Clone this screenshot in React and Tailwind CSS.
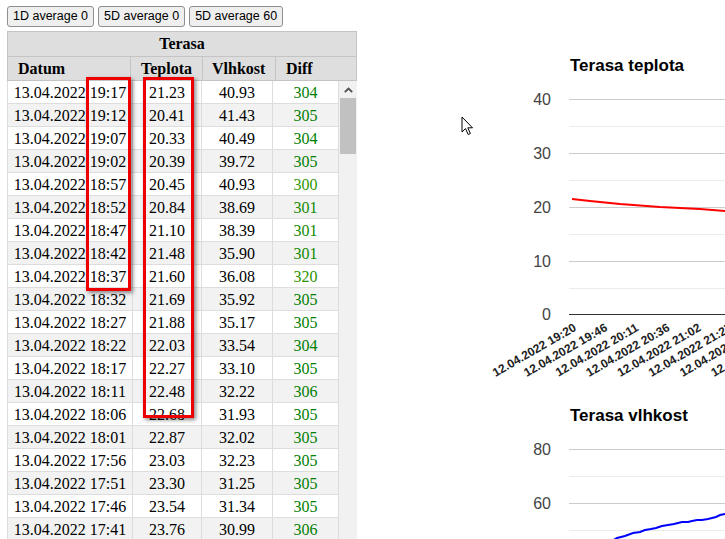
import React from "react";

const rows = [
  ["19:17", "21.23", "40.93", 304],
  ["19:12", "20.41", "41.43", 305],
  ["19:07", "20.33", "40.49", 304],
  ["19:02", "20.39", "39.72", 305],
  ["18:57", "20.45", "40.93", 300],
  ["18:52", "20.84", "38.69", 301],
  ["18:47", "21.10", "38.39", 301],
  ["18:42", "21.48", "35.90", 301],
  ["18:37", "21.60", "36.08", 320],
  ["18:32", "21.69", "35.92", 305],
  ["18:27", "21.88", "35.17", 305],
  ["18:22", "22.03", "33.54", 304],
  ["18:17", "22.27", "33.10", 305],
  ["18:11", "22.48", "32.22", 306],
  ["18:06", "22.68", "31.93", 305],
  ["18:01", "22.87", "32.02", 305],
  ["17:56", "23.03", "32.23", 305],
  ["17:51", "23.30", "31.25", 305],
  ["17:46", "23.54", "31.34", 305],
  ["17:41", "23.76", "30.99", 306],
];

const diffColor = (d) => {
  if (d === 300) return "#2f9800";
  if (d === 320) return "#2a9400";
  if (d === 301) return "#138a00";
  return "#008000";
};

const xLabels = [
  "12.04.2022 19:20",
  "12.04.2022 19:46",
  "12.04.2022 20:11",
  "12.04.2022 20:36",
  "12.04.2022 21:02",
  "12.04.2022 21:27",
  "12.04.2022 21:53",
  "12.04.2022 22:18",
];

function Chart1() {
  const major = [99, 153, 207, 261];
  const minor = [126, 180, 234, 288];
  const labels = ["40", "30", "20", "10"];
  return (
    <svg width="245" height="350" className="block">
      <g transform="translate(-480,-40)" fontFamily="'Liberation Sans', Arial, sans-serif">
        <text x="570" y="71" fontSize="17" fontWeight="bold" fill="#000">Terasa teplota</text>
        {minor.map((y) => (
          <line key={"m" + y} x1="569" x2="760" y1={y + 0.5} y2={y + 0.5} stroke="#ebebeb" strokeWidth="1" />
        ))}
        {major.map((y, i) => (
          <g key={"M" + y}>
            <line x1="569" x2="760" y1={y + 0.5} y2={y + 0.5} stroke="#cccccc" strokeWidth="1" />
            <text x="551" y={y + 6} fontSize="16" fill="#444" textAnchor="end">{labels[i]}</text>
          </g>
        ))}
        <line x1="569" x2="760" y1="314.5" y2="314.5" stroke="#333" strokeWidth="1" />
        <text x="551" y="320" fontSize="16" fill="#444" textAnchor="end">0</text>
        <polyline
          points="572,199 590,201 620,204 660,207 700,209 725,211 740,212"
          fill="none"
          stroke="#ff0000"
          strokeWidth="2"
        />
        {xLabels.map((t, i) => {
          const ex = 577 + 31.2 * i;
          const ey = 330;
          return (
            <text
              key={t}
              x={ex}
              y={ey}
              fontSize="12"
              fontWeight="bold"
              fill="#222"
              textAnchor="end"
              transform={`rotate(-30 ${ex} ${ey})`}
            >
              {t}
            </text>
          );
        })}
      </g>
    </svg>
  );
}

function Chart2() {
  return (
    <svg width="245" height="149" className="block">
      <g transform="translate(-480,-390)" fontFamily="'Liberation Sans', Arial, sans-serif">
        <text x="570" y="421" fontSize="17" fontWeight="bold" fill="#000">Terasa vlhkost</text>
        <line x1="569" x2="760" y1="476.5" y2="476.5" stroke="#ebebeb" />
        <line x1="569" x2="760" y1="530.5" y2="530.5" stroke="#ebebeb" />
        <line x1="569" x2="760" y1="449.5" y2="449.5" stroke="#cccccc" />
        <line x1="569" x2="760" y1="503.5" y2="503.5" stroke="#cccccc" />
        <text x="551" y="455" fontSize="16" fill="#444" textAnchor="end">80</text>
        <text x="551" y="509" fontSize="16" fill="#444" textAnchor="end">60</text>
        <polyline
          points="612,541 617,538 625,536 633,533 640,532 645,530 651,529 656,528 662,526 668,525 674,524 678,523 682,522 688,522 692,521 697,520 702,520 708,519 712,518 716,517 720,515 725,514 735,514"
          fill="none"
          stroke="#0000ff"
          strokeWidth="2"
        />
      </g>
    </svg>
  );
}

function Btn({ children }) {
  return (
    <button className="h-[21px] px-[5px] rounded-[3px] border border-[#8f8f8f] bg-[#efefef] text-[12.5px] leading-none text-black font-['Liberation_Sans',Arial,sans-serif]">
      {children}
    </button>
  );
}

export default function App() {
  return (
    <div className="relative w-[725px] h-[539px] overflow-hidden bg-white flex">
      {/* Left column */}
      <div className="w-[357px] shrink-0 pl-[7px] pt-[6px] flex flex-col">
        <div className="flex gap-[4px]">
          <Btn>1D average 0</Btn>
          <Btn>5D average 0</Btn>
          <Btn>5D average 60</Btn>
        </div>
        <div className="relative mt-[4px] w-[350px] font-['Liberation_Serif','Times_New_Roman',serif] text-[16px] text-black">
          {/* header */}
          <div className="border border-[#c4c4c4] bg-[#dedede] font-bold">
            <div className="h-[25px] flex items-center justify-center border-b border-[#c4c4c4]">Terasa</div>
            <div className="grid grid-cols-[123px_72px_73px_80px] h-[23px]">
              <div className="flex items-center pl-[10px] border-r border-[#c4c4c4]">Datum</div>
              <div className="flex items-center pl-[10px] border-r border-[#c4c4c4]">Teplota</div>
              <div className="flex items-center pl-[9px] border-r border-[#c4c4c4]">Vlhkost</div>
              <div className="flex items-center pl-[10px]">Diff</div>
            </div>
          </div>
          {/* body */}
          <div className="flex h-[470px] overflow-hidden">
            <div className="w-[332px] border-l border-[#dddddd]">
              {rows.map((r, i) => (
                <div
                  key={r[0]}
                  className={
                    "grid grid-cols-[125px_69px_71px_66px] h-[23px] border-b border-[#dddddd] " +
                    (i % 2 === 1 ? "bg-[#f2f2f2]" : "bg-white")
                  }
                >
                  <div className="flex items-center justify-center border-r border-[#dddddd] whitespace-nowrap">
                    13.04.2022 {r[0]}
                  </div>
                  <div className="flex items-center justify-center border-r border-[#dddddd]">{r[1]}</div>
                  <div className="flex items-center justify-center border-r border-[#dddddd]">{r[2]}</div>
                  <div className="flex items-center justify-center border-r border-[#dddddd]" style={{ color: diffColor(r[3]) }}>
                    {r[3]}
                  </div>
                </div>
              ))}
            </div>
            <div className="w-[18px] bg-[#f1f1f1] flex flex-col">
              <div className="h-[17px] flex items-center justify-center">
                <svg width="9" height="6" viewBox="0 0 9 6">
                  <path d="M0.8 5.2 L4.5 1.5 L8.2 5.2" fill="none" stroke="#505050" strokeWidth="1.8" />
                </svg>
              </div>
              <div className="h-[56px] mx-[1px] bg-[#c1c1c1]" />
            </div>
          </div>
          {/* highlight boxes */}
          <div className="absolute left-[79px] top-[46px] w-[45px] h-[214px] border-[3px] border-[#ee0000] shadow-[2px_2px_4px_rgba(0,0,0,0.45)]" />
          <div className="absolute left-[136px] top-[46px] w-[51px] h-[341px] border-[3px] border-[#ee0000] shadow-[2px_2px_4px_rgba(0,0,0,0.45)]" />
        </div>
      </div>
      {/* Charts */}
      <div className="ml-[123px] w-[245px] shrink-0 pt-[40px] flex flex-col">
        <Chart1 />
        <Chart2 />
      </div>
      {/* mouse cursor */}
      <svg className="absolute left-[461px] top-[116px]" width="13" height="20" viewBox="0 0 13 20">
        <path d="M1 1 L1 16 L4.5 12.6 L7.2 18.5 L9.4 17.5 L6.8 11.8 L11.5 11.8 Z" fill="#fff" stroke="#000" strokeWidth="1" strokeLinejoin="miter" />
      </svg>
    </div>
  );
}
